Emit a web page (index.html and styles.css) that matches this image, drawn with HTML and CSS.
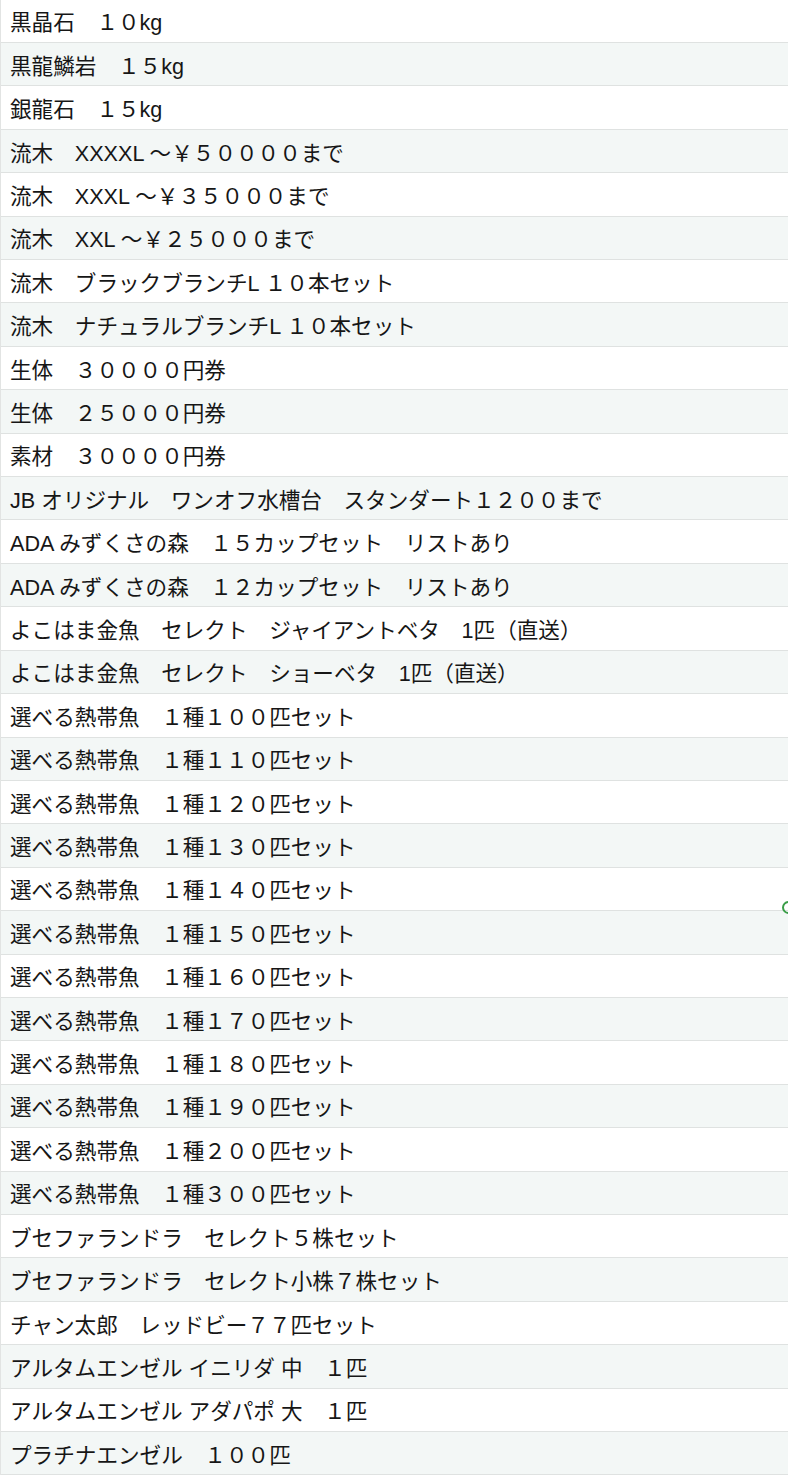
FILE: index.html
```html
<!DOCTYPE html>
<html lang="ja">
<head>
<meta charset="utf-8">
<title>リスト</title>
<link rel="stylesheet" href="styles.css">
</head>
<body>
<ul class="list">
  <li class="row">黒晶石　１０kg</li>
  <li class="row">黒龍鱗岩　１５kg</li>
  <li class="row">銀龍石　１５kg</li>
  <li class="row">流木　XXXXL ～￥５００００まで</li>
  <li class="row">流木　XXXL ～￥３５０００まで</li>
  <li class="row">流木　XXL ～￥２５０００まで</li>
  <li class="row">流木　ブラックブランチL １０本セット</li>
  <li class="row">流木　ナチュラルブランチL １０本セット</li>
  <li class="row">生体　３００００円券</li>
  <li class="row">生体　２５０００円券</li>
  <li class="row">素材　３００００円券</li>
  <li class="row">JB オリジナル　ワンオフ水槽台　スタンダート１２００まで</li>
  <li class="row">ADA みずくさの森　１５カップセット　リストあり</li>
  <li class="row">ADA みずくさの森　１２カップセット　リストあり</li>
  <li class="row">よこはま金魚　セレクト　ジャイアントベタ　1匹（直送）</li>
  <li class="row">よこはま金魚　セレクト　ショーベタ　1匹（直送）</li>
  <li class="row">選べる熱帯魚　１種１００匹セット</li>
  <li class="row">選べる熱帯魚　１種１１０匹セット</li>
  <li class="row">選べる熱帯魚　１種１２０匹セット</li>
  <li class="row">選べる熱帯魚　１種１３０匹セット</li>
  <li class="row">選べる熱帯魚　１種１４０匹セット</li>
  <li class="row">選べる熱帯魚　１種１５０匹セット</li>
  <li class="row">選べる熱帯魚　１種１６０匹セット</li>
  <li class="row">選べる熱帯魚　１種１７０匹セット</li>
  <li class="row">選べる熱帯魚　１種１８０匹セット</li>
  <li class="row">選べる熱帯魚　１種１９０匹セット</li>
  <li class="row">選べる熱帯魚　１種２００匹セット</li>
  <li class="row">選べる熱帯魚　１種３００匹セット</li>
  <li class="row">ブセファランドラ　セレクト５株セット</li>
  <li class="row">ブセファランドラ　セレクト小株７株セット</li>
  <li class="row">チャン太郎　レッドビー７７匹セット</li>
  <li class="row">アルタムエンゼル イニリダ 中　１匹</li>
  <li class="row">アルタムエンゼル アダパポ 大　１匹</li>
  <li class="row">プラチナエンゼル　１００匹</li>
</ul>
<span class="marker"></span>
</body>
</html>
```
FILE: styles.css
```css
html, body {
  margin: 0;
  padding: 0;
  background: #ffffff;
}
body {
  position: relative;
  overflow: hidden;
  font-family: "Liberation Sans", "Noto Sans CJK JP", sans-serif;
  color: #161616;
}
.list {
  list-style: none;
  margin: -0.4px 0 0 0;
  padding: 0;
  border-left: 1px solid #e2e4e3;
}
.row {
  box-sizing: border-box;
  height: 43.41px;
  padding: 0 9px;
  display: flex;
  align-items: center;
  font-size: 21.6px;
  white-space: nowrap;
  border-bottom: 1px solid #dfe2e1;
  background: #ffffff;
}
.row:nth-child(even) {
  background: #f3f7f6;
}
.marker {
  position: absolute;
  left: 782px;
  top: 901px;
  width: 9px;
  height: 9px;
  border: 2px solid #3a9e48;
  border-radius: 50%;
}
```
